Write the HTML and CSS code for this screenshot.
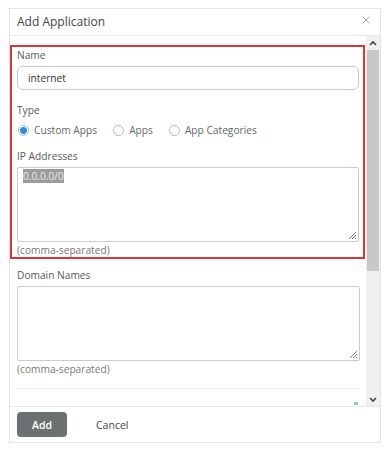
FILE: index.html
```html
<!DOCTYPE html>
<html lang="en">
<head>
    <meta charset="UTF-8">
    <title>Add Application</title>
    <link rel="stylesheet" href="styles.css">
</head>
<body>
    <div class="dialog">
        <div class="dialog-header">
            <span class="dialog-title">Add Application</span>
            <svg class="close-btn" width="8" height="8" viewBox="0 0 8 8">
                <path d="M0.5 0.5 L7.5 7.5 M7.5 0.5 L0.5 7.5" stroke="#9a9a9a" stroke-width="0.9" fill="none"/>
            </svg>
        </div>
        <div class="dialog-body">
            <div class="content">
                <div class="highlight-box">
                    <div class="field-label">Name</div>
                    <div class="text-input">internet</div>

                    <div class="field-label type-label">Type</div>
                    <div class="radio-row">
                        <label class="radio"><span class="radio-dot checked"></span>Custom Apps</label>
                        <label class="radio"><span class="radio-dot"></span>Apps</label>
                        <label class="radio"><span class="radio-dot"></span>App Categories</label>
                    </div>

                    <div class="field-label ip-label">IP Addresses</div>
                    <div class="text-area">
                        <span class="selected">0.0.0.0/0</span>
                        <svg class="grip" width="10" height="10" viewBox="0 0 10 10">
                            <path d="M9 2 L2 9 M9 5 L5 9 M9 8 L8 9" stroke="#777" stroke-width="1" fill="none"/>
                        </svg>
                    </div>
                    <div class="hint">(comma-separated)</div>
                </div>

                <div class="plain-fields">
                    <div class="field-label">Domain Names</div>
                    <div class="text-area">
                        <svg class="grip" width="10" height="10" viewBox="0 0 10 10">
                            <path d="M9 2 L2 9 M9 5 L5 9 M9 8 L8 9" stroke="#777" stroke-width="1" fill="none"/>
                        </svg>
                    </div>
                    <div class="hint">(comma-separated)</div>
                    <div class="cut-row"><span class="cut-mark"></span></div>
                </div>
            </div>
            <div class="scrollbar">
                <div class="arrow">
                    <svg width="8" height="6" viewBox="0 0 8 6"><path d="M1 5 L4 2 L7 5" stroke="#444" stroke-width="1.6" fill="none"/></svg>
                </div>
                <div class="track"><div class="thumb"></div></div>
                <div class="arrow">
                    <svg width="8" height="6" viewBox="0 0 8 6"><path d="M1 1 L4 4 L7 1" stroke="#444" stroke-width="1.6" fill="none"/></svg>
                </div>
            </div>
        </div>
        <div class="dialog-footer">
            <button class="btn-add">Add</button>
            <button class="btn-cancel">Cancel</button>
        </div>
    </div>
</body>
</html>
```

FILE: styles.css
```css
body {
    margin: 0;
    background: #fff;
    font-family: 'Open Sans', 'Noto Sans', sans-serif;
    font-size: 10.2px;
    color: #555;
}
.dialog {
    margin: 8px 0 0 9px;
    width: 372px;
    height: 435px;
    box-sizing: border-box;
    border: 1px solid #e4e4e4;
    display: flex;
    flex-direction: column;
    background: #fff;
}
.dialog-header {
    height: 27px;
    box-sizing: border-box;
    border-bottom: 1px solid #ebebeb;
    display: flex;
    align-items: center;
    justify-content: space-between;
    padding: 0 10px 2px 7px;
}
.dialog-title {
    font-size: 12px;
    color: #444;
}
.close-btn {
    margin-top: -2px;
}
.dialog-body {
    flex: 1;
    display: flex;
    min-height: 0;
}
.content {
    flex: 1;
    overflow: hidden;
}
.highlight-box {
    margin: 9px 1px 0 0;
    border: 2px solid #d8353e;
    padding: 0 4px 0 5px;
}
.field-label {
    line-height: 16px;
    color: #595959;
}
.text-input {
    margin-top: 3px;
    height: 24px;
    box-sizing: border-box;
    border: 1px solid #c9c9c9;
    border-radius: 6px;
    padding: 0 10px;
    line-height: 22px;
    color: #333;
}
.type-label {
    margin-top: 12px;
}
.radio-row {
    display: flex;
    gap: 15px;
    margin-top: 4px;
    height: 16px;
    align-items: center;
}
.radio {
    display: flex;
    align-items: center;
    gap: 5px;
    color: #666;
}
.radio-dot {
    width: 11px;
    height: 11px;
    border: 1px solid #b8b8b8;
    border-radius: 50%;
    box-sizing: border-box;
    background: #fff;
    margin-left: 1px;
}
.radio-dot.checked {
    border-color: #9cc3e0;
    background: radial-gradient(circle, #2f8fd6 0, #2f8fd6 3.2px, #fff 3.8px);
}
.ip-label {
    margin-top: 10px;
}
.text-area {
    position: relative;
    margin-top: 3px;
    height: 75px;
    box-sizing: border-box;
    border: 1px solid #cbcbcb;
    border-radius: 2px;
    padding: 2px 5px;
    line-height: 13px;
}
.selected {
    background: #9c9c9c;
    color: #e8e8e8;
}
.grip {
    position: absolute;
    right: 1px;
    bottom: 1px;
}
.hint {
    line-height: 14px;
    color: #777;
    margin-top: 1px;
}
.plain-fields {
    padding: 8px 6px 0 7px;
}
.cut-row {
    margin-top: 12px;
    border-top: 1px solid #f1f1f1;
    height: 16px;
    position: relative;
}
.cut-mark {
    position: absolute;
    right: 2px;
    bottom: 0;
    width: 4px;
    height: 3px;
    background: #8ec6e6;
}
.scrollbar {
    width: 14px;
    background: #f0f0f0;
    display: flex;
    flex-direction: column;
}
.arrow {
    height: 13px;
    display: flex;
    align-items: center;
    justify-content: center;
}
.track {
    flex: 1;
    padding-top: 1px;
}
.thumb {
    height: 221px;
    margin: 0 1px;
    background: #c8c8c8;
}
.dialog-footer {
    height: 36px;
    box-sizing: border-box;
    border-top: 1px solid #e6e6e6;
    display: flex;
    align-items: center;
    padding: 0 7px;
    gap: 14px;
}
.btn-add {
    width: 50px;
    height: 25px;
    border: none;
    border-radius: 4px;
    background: #6d7070;
    color: #fff;
    font-family: 'Open Sans', 'Noto Sans', sans-serif;
    font-size: 10.5px;
    font-weight: 600;
}
.btn-cancel {
    border: none;
    background: transparent;
    color: #444;
    font-family: 'Open Sans', 'Noto Sans', sans-serif;
    font-size: 10.5px;
    padding: 0 15px;
}
```
